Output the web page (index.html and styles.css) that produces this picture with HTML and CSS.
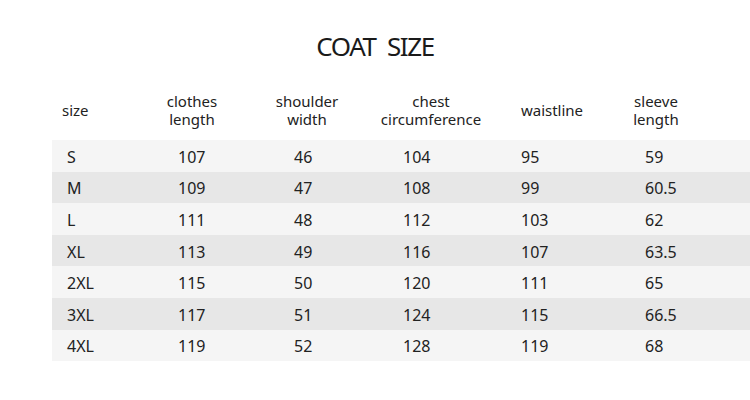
FILE: index.html
```html
<!DOCTYPE html>
<html>
<head>
<meta charset="utf-8">
<link rel="stylesheet" href="styles.css">
</head>
<body>
<h1 class="title">COAT SIZE</h1>
<div class="table">
  <div class="row head">
    <div class="c c1">size</div>
    <div class="c c2">clothes<br>length</div>
    <div class="c c3">shoulder<br>width</div>
    <div class="c c4">chest<br>circumference</div>
    <div class="c c5">waistline</div>
    <div class="c c6">sleeve<br>length</div>
  </div>
  <div class="row light"><div class="c c1">S</div><div class="c c2">107</div><div class="c c3">46</div><div class="c c4">104</div><div class="c c5">95</div><div class="c c6">59</div></div>
  <div class="row dark"><div class="c c1">M</div><div class="c c2">109</div><div class="c c3">47</div><div class="c c4">108</div><div class="c c5">99</div><div class="c c6">60.5</div></div>
  <div class="row light"><div class="c c1">L</div><div class="c c2">111</div><div class="c c3">48</div><div class="c c4">112</div><div class="c c5">103</div><div class="c c6">62</div></div>
  <div class="row dark"><div class="c c1">XL</div><div class="c c2">113</div><div class="c c3">49</div><div class="c c4">116</div><div class="c c5">107</div><div class="c c6">63.5</div></div>
  <div class="row light"><div class="c c1">2XL</div><div class="c c2">115</div><div class="c c3">50</div><div class="c c4">120</div><div class="c c5">111</div><div class="c c6">65</div></div>
  <div class="row dark"><div class="c c1">3XL</div><div class="c c2">117</div><div class="c c3">51</div><div class="c c4">124</div><div class="c c5">115</div><div class="c c6">66.5</div></div>
  <div class="row light"><div class="c c1">4XL</div><div class="c c2">119</div><div class="c c3">52</div><div class="c c4">128</div><div class="c c5">119</div><div class="c c6">68</div></div>
</div>
</body>
</html>
```
FILE: styles.css
```css
html, body {
  margin: 0;
  padding: 0;
  background: #ffffff;
}
body {
  width: 750px;
  height: 400px;
  overflow: hidden;
  font-family: "Noto Sans", "Open Sans", sans-serif;
  color: #222222;
}
.title {
  margin: 0;
  padding-top: 28px;
  font-size: 26px;
  line-height: 36px;
  font-weight: 400;
  letter-spacing: -1.4px;
  word-spacing: 6px;
  text-align: center;
  color: #1a1a1a;
}
.table {
  margin-left: 52px;
  width: 698px;
  margin-top: 16px;
}
.row {
  display: grid;
  grid-template-columns: 80px 120px 110px 138px 104px 104px 1fr;
  align-items: center;
}
.head {
  height: 60px;
  font-size: 15px;
  line-height: 18px;
}
.head .c {
  text-align: center;
}
.head .c1 {
  text-align: left;
  padding-left: 10px;
}
.light, .dark {
  box-sizing: border-box;
  height: 31.6px;
  padding-top: 2px;
  font-size: 16px;
  line-height: 20px;
}
.light { background: #f5f5f5; }
.dark { background: #e7e7e7; }
.light .c1, .dark .c1 { padding-left: 15px; }
.light .c2, .dark .c2 { padding-left: 46px; }
.light .c3, .dark .c3 { padding-left: 42px; }
.light .c4, .dark .c4 { padding-left: 41px; }
.light .c5, .dark .c5 { padding-left: 21px; }
.light .c6, .dark .c6 { padding-left: 41px; }
```
